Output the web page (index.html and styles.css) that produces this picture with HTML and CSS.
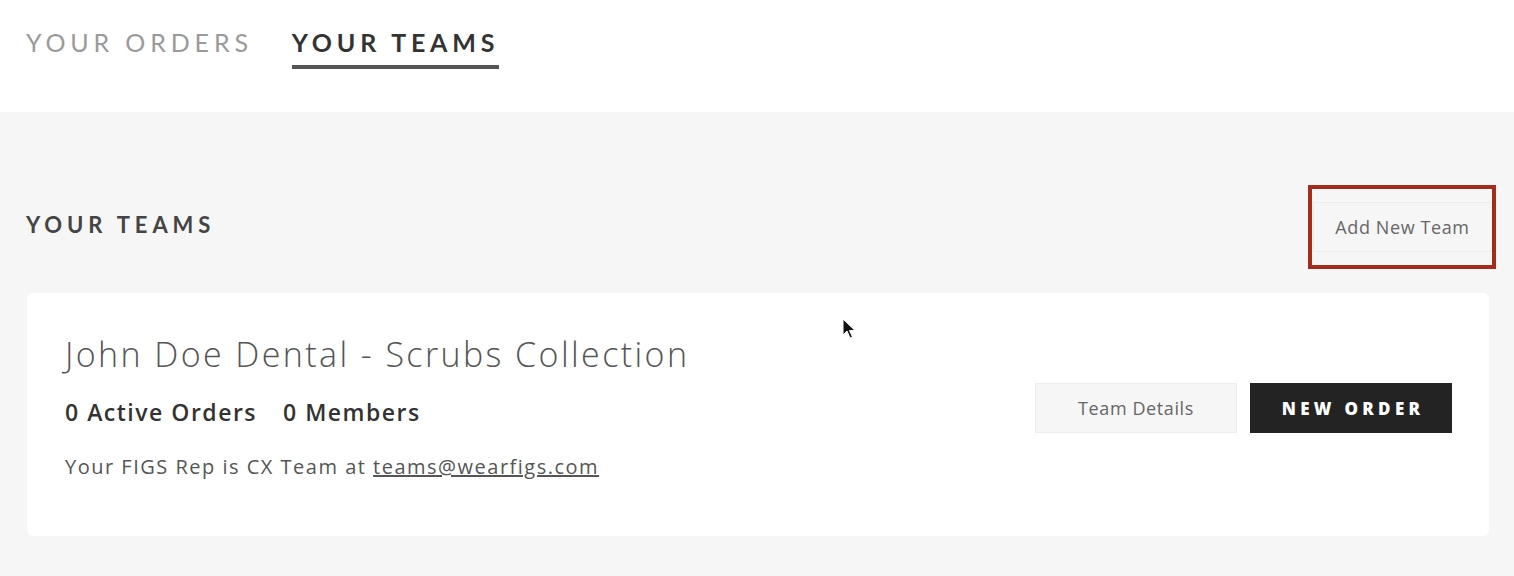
FILE: index.html
```html
<!DOCTYPE html>
<html>
<head>
<meta charset="utf-8">
<link rel="stylesheet" href="styles.css">
</head>
<body>
<header class="tabs">
  <a class="tab">YOUR ORDERS</a>
  <a class="tab active">YOUR TEAMS</a>
</header>
<main class="content">
  <div class="section-head">
    <h2 class="section-title">YOUR TEAMS</h2>
    <div class="highlight">
      <button class="btn btn-light btn-add">Add New Team</button>
    </div>
  </div>
  <div class="card">
    <div class="card-info">
      <h3 class="team-name">John Doe Dental - Scrubs Collection</h3>
      <div class="stats"><span>0 Active Orders</span><span>0 Members</span></div>
      <p class="rep">Your FIGS Rep is CX Team at <a class="mail">teams@wearfigs.com</a></p>
    </div>
    <div class="card-actions">
      <button class="btn btn-light">Team Details</button>
      <button class="btn btn-dark">NEW ORDER</button>
    </div>
    <svg class="cursor" width="14" height="22" viewBox="0 0 14 22"><path d="M1 1 L1 17 L5 13 L8 20 L10.5 19 L7.5 12.5 L13 12.5 Z" fill="#111" stroke="#fff" stroke-width="1"/></svg>
  </div>
</main>
</body>
</html>
```
FILE: styles.css
```css
* { box-sizing: border-box; }
html, body { margin: 0; padding: 0; }
body {
  width: 1514px;
  height: 576px;
  overflow: hidden;
  background: #f6f6f6;
  font-family: "Open Sans", Lato, sans-serif;
  color: #444;
}
.tabs {
  background: #fff;
  height: 112px;
  display: flex;
  align-items: flex-start;
  padding: 28px 0 0 26px;
  gap: 39px;
}
.tab {
  font-family: Lato, "Open Sans", sans-serif;
  font-size: 25px;
  letter-spacing: 4.85px;
  font-weight: 400;
  color: #9a9a9a;
  padding-bottom: 9px;
  border-bottom: 4px solid transparent;
  line-height: 28px;
}
.tab.active {
  color: #333;
  font-weight: 700;
  letter-spacing: 4.8px;
  border-bottom-color: #555;
}
.content {
  padding: 73px 18px 0 27px;
}
.section-head {
  display: flex;
  justify-content: space-between;
  align-items: flex-start;
}
.section-title {
  margin: 27px 0 0 -1px;
  font-family: Lato, "Open Sans", sans-serif;
  font-size: 22px;
  line-height: 1.2;
  letter-spacing: 4.9px;
  font-weight: 700;
  color: #444;
}
.highlight {
  border: 4px solid #a52c1c;
  padding: 13px 0 13px 1px;
}
.btn {
  font-family: "Open Sans", Lato, sans-serif;
  height: 50px;
  border-radius: 0;
  cursor: pointer;
  padding: 0;
}
.btn-light {
  background: #f6f6f6;
  border: 1px solid #ececec;
  color: #666;
  font-size: 18px;
  letter-spacing: 0.6px;
  width: 202px;
}
.btn-add {
  width: 179px;
  padding-top: 0;
}
.btn-dark {
  background: #232323;
  border: 1px solid #232323;
  color: #fff;
  font-size: 17px;
  font-weight: 800;
  letter-spacing: 4.3px;
  padding-left: 4px;
  width: 202px;
}
.card {
  position: relative;
  margin-top: 24px;
  width: 1462px;
  height: 243px;
  background: #fff;
  border-radius: 6px;
  display: flex;
  justify-content: space-between;
  align-items: flex-start;
  padding: 41px 37px 0 38px;
}
.team-name {
  margin: 0;
  font-size: 34px;
  font-weight: 300;
  letter-spacing: 2.4px;
  color: #555;
  line-height: 40px;
}
.stats {
  display: flex;
  gap: 26px;
  margin-top: 24px;
  font-size: 23px;
  letter-spacing: 1.5px;
  line-height: 28px;
  font-weight: 600;
  color: #333;
}
.rep {
  margin: 29px 0 0;
  font-size: 20px;
  letter-spacing: 1.5px;
  line-height: 24px;
  color: #555;
}
.mail {
  text-decoration: underline;
  color: #555;
}
.card-actions {
  display: flex;
  gap: 13px;
  margin-top: 49px;
}
.cursor {
  position: absolute;
  left: 815px;
  top: 25px;
}
```
